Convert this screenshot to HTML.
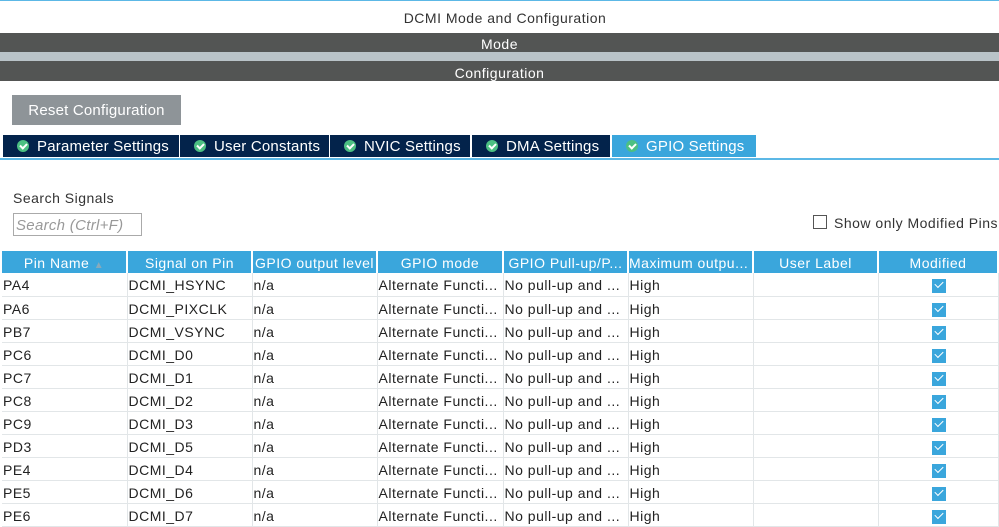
<!DOCTYPE html>
<html><head><meta charset="utf-8"><style>
*{margin:0;padding:0;box-sizing:border-box}
body{width:999px;height:526px;overflow:hidden;background:#fff;font-family:"Liberation Sans",sans-serif;font-size:14px;color:#222;position:relative;letter-spacing:0.5px}
.a{position:absolute}
.bar{left:0;width:999px;background:#535554;color:#fff;text-align:center;font-size:14px}
.tab{top:135px;height:22px;background:#03234b;color:#fff;font-size:15px;line-height:24px;padding-left:14px;white-space:nowrap;letter-spacing:0.2px}
.tab i{display:inline-block;width:12px;height:12px;border-radius:50%;background:#4cc083;vertical-align:-1px;margin-right:8px;position:relative}
.tab i:after{content:"";position:absolute;left:3px;top:3px;width:5px;height:3px;border-left:2px solid #fff;border-bottom:2px solid #fff;transform:rotate(-45deg)}
table{position:absolute;left:2px;top:251px;border-collapse:collapse;table-layout:fixed;width:997px}
th{background:#3aa6dc;color:#fff;font-weight:normal;height:22px;font-size:14px;border-right:2px solid #fff;white-space:nowrap;overflow:hidden;padding-top:2px}
td{height:23px;border-right:1px solid #e2e6e8;border-bottom:1px solid #e2e6e8;padding-left:1px;white-space:nowrap;overflow:hidden;padding-top:2px}
.cb{display:inline-block;width:14px;height:14px;background:#3aa6dc;position:relative;vertical-align:middle}
.cb:after{content:"";position:absolute;left:3px;top:2px;width:7px;height:4px;border-left:1.5px solid #fff;border-bottom:1.5px solid #fff;transform:rotate(-45deg)}
</style></head><body>
<div class="a" style="left:0;top:0;width:999px;height:1px;background:#5cb8e6"></div>
<div class="a" style="left:0;top:10px;width:1010px;text-align:center;color:#333">DCMI Mode and Configuration</div>
<div class="a bar" style="top:33px;height:19px;line-height:22px">Mode</div>
<div class="a" style="left:0;top:52px;width:999px;height:9px;background:#b9c3c8"></div>
<div class="a bar" style="top:61px;height:20px;line-height:24px">Configuration</div>
<div class="a" style="left:12px;top:95px;width:169px;height:30px;background:#8e9498;color:#fff;font-size:15px;line-height:32px;text-align:center;letter-spacing:0.2px">Reset Configuration</div>
<div class="a tab" style="left:3px;width:176px"><i></i>Parameter Settings</div>
<div class="a tab" style="left:180px;width:149px"><i></i>User Constants</div>
<div class="a tab" style="left:330px;width:140px"><i></i>NVIC Settings</div>
<div class="a tab" style="left:472px;width:138px"><i></i>DMA Settings</div>
<div class="a tab" style="left:612px;width:144px;background:#3aa6dc"><i></i>GPIO Settings</div>
<div class="a" style="left:0;top:158px;width:999px;height:2px;background:#5cb8e6"></div>
<div class="a" style="left:13px;top:190px;color:#333">Search Signals</div>
<div class="a" style="left:13px;top:213px;width:129px;height:23px;border:1px solid #aaa;color:#999;font-style:italic;padding-left:2px;line-height:23px;font-size:15px;letter-spacing:0.3px">Search (Ctrl+F)</div>
<div class="a" style="left:813px;top:215px;width:14px;height:14px;border:1px solid #555"></div>
<div class="a" style="left:834px;top:215px;color:#333">Show only Modified Pins</div>
<table>
<colgroup><col style="width:125px"><col style="width:125px"><col style="width:125px"><col style="width:126px"><col style="width:125px"><col style="width:125px"><col style="width:125px"><col></colgroup>
<tr><th>Pin Name <span style="color:#8ab;font-size:10px">▲</span></th><th>Signal on Pin</th><th>GPIO output level</th><th>GPIO mode</th><th>GPIO Pull-up/P...</th><th style="text-align:left">Maximum outpu...</th><th>User Label</th><th>Modified</th></tr>
<tr><td>PA4</td><td>DCMI_HSYNC</td><td>n/a</td><td>Alternate Functi...</td><td>No pull-up and ...</td><td>High</td><td></td><td style="text-align:center"><span class="cb"></span></td></tr>
<tr><td>PA6</td><td>DCMI_PIXCLK</td><td>n/a</td><td>Alternate Functi...</td><td>No pull-up and ...</td><td>High</td><td></td><td style="text-align:center"><span class="cb"></span></td></tr>
<tr><td>PB7</td><td>DCMI_VSYNC</td><td>n/a</td><td>Alternate Functi...</td><td>No pull-up and ...</td><td>High</td><td></td><td style="text-align:center"><span class="cb"></span></td></tr>
<tr><td>PC6</td><td>DCMI_D0</td><td>n/a</td><td>Alternate Functi...</td><td>No pull-up and ...</td><td>High</td><td></td><td style="text-align:center"><span class="cb"></span></td></tr>
<tr><td>PC7</td><td>DCMI_D1</td><td>n/a</td><td>Alternate Functi...</td><td>No pull-up and ...</td><td>High</td><td></td><td style="text-align:center"><span class="cb"></span></td></tr>
<tr><td>PC8</td><td>DCMI_D2</td><td>n/a</td><td>Alternate Functi...</td><td>No pull-up and ...</td><td>High</td><td></td><td style="text-align:center"><span class="cb"></span></td></tr>
<tr><td>PC9</td><td>DCMI_D3</td><td>n/a</td><td>Alternate Functi...</td><td>No pull-up and ...</td><td>High</td><td></td><td style="text-align:center"><span class="cb"></span></td></tr>
<tr><td>PD3</td><td>DCMI_D5</td><td>n/a</td><td>Alternate Functi...</td><td>No pull-up and ...</td><td>High</td><td></td><td style="text-align:center"><span class="cb"></span></td></tr>
<tr><td>PE4</td><td>DCMI_D4</td><td>n/a</td><td>Alternate Functi...</td><td>No pull-up and ...</td><td>High</td><td></td><td style="text-align:center"><span class="cb"></span></td></tr>
<tr><td>PE5</td><td>DCMI_D6</td><td>n/a</td><td>Alternate Functi...</td><td>No pull-up and ...</td><td>High</td><td></td><td style="text-align:center"><span class="cb"></span></td></tr>
<tr><td>PE6</td><td>DCMI_D7</td><td>n/a</td><td>Alternate Functi...</td><td>No pull-up and ...</td><td>High</td><td></td><td style="text-align:center"><span class="cb"></span></td></tr>
</table>
</body></html>
